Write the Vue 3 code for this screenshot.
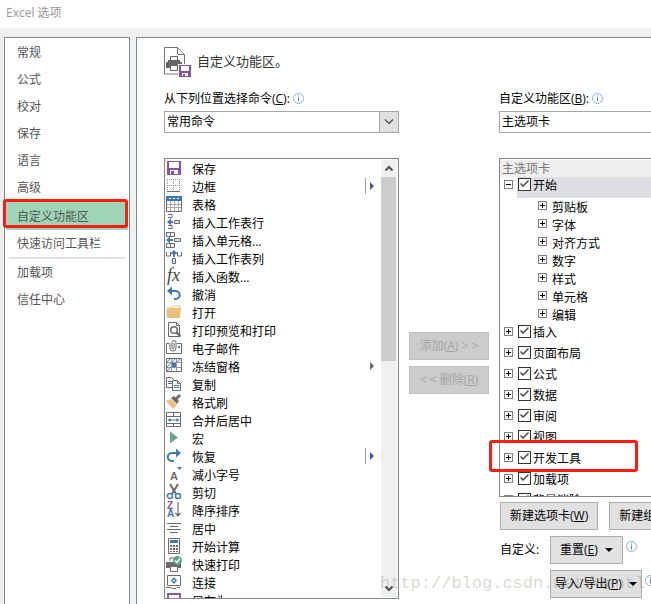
<script setup>
import { ref } from 'vue'

const navTop = ['常规', '公式', '校对', '保存', '语言', '高级', '自定义功能区', '快速访问工具栏']
const navBottom = ['加载项', '信任中心']
const active = ref('自定义功能区')

const G = '#6b6b6b'
const B = '#3f78b5'
const P = '#8653a5'
const T = '#e9c07f'

const commands = [
  { name: '保存', icon: `<path d="M1 1h14v14H1z" fill="${P}"/><path d="M3 2h10v6H3zM4 10h8v4H4z" fill="#fff"/><path d="M5 11h3v3H5z" fill="${P}"/>` },
  { name: '边框', split: true, icon: `<path d="M1.500 1v12M7.500 1v12M13.500 1v12M1 1.500h13M1 7.500h13" fill="none" stroke="#8d8d8d" stroke-dasharray="1 1"/><path d="M1 13.500h13" stroke="${G}"/>` },
  { name: '表格', icon: `<path d="M.500 .500h15v15H.500z" fill="#fff" stroke="${G}"/><path d="M0 0h16v5H0z" fill="${B}"/><path d="M3 2h2v1H3zM7 2h2v1H7zM11 2h2v1h-2z" fill="#fff"/><path d="M4.500 5v10M8.500 5v10M12.500 5v10M1 8.500h14M1 11.500h14" stroke="#aaa"/>` },
  { name: '插入工作表行', icon: `<path d="M2 .500h4v3H2M2 11.500h4v3H2" fill="none" stroke="${G}"/><path d="M8.500 6.500h5v3h-5z" fill="#d7e4f2" stroke="${G}"/><path d="M1 8l4-3.500v2.500h2v2H5v2.500z" fill="${B}"/>` },
  { name: '插入单元格...', icon: `<path d="M.500 .500h8v4h-8zM4.500 .500v4M.500 11.500h8v4h-8zM4.500 11.500v4" fill="none" stroke="${G}"/><path d="M8.500 6.500h6v3h-6z" fill="#d7e4f2" stroke="${G}"/><path d="M0 8l4-3.500v2.500h3v2H4v2.500z" fill="${B}"/>` },
  { name: '插入工作表列', icon: `<path d="M.500 2v4h4V2M11.500 2v4h4V2" fill="none" stroke="${G}"/><path d="M6.500 8.500h3v5h-3z" fill="#d7e4f2" stroke="${G}"/><path d="M8 0l4 4H9v3H7V4H4z" fill="${B}"/>` },
  { name: '插入函数...', icon: `<text x="1" y="13" font-family="Liberation Serif, serif" font-style="italic" font-size="18" fill="#444">fx</text>` },
  { name: '撤消', icon: `<path d="M3 5h6.500a4 3.800 0 0 1 0 8H8" fill="none" stroke="${B}" stroke-width="2"/><path d="M1 5l5-4.500v9z" fill="${B}"/>` },
  { name: '打开', icon: `<path d="M1 13V4h5l1-2h7v3" fill="#fff" stroke="${T}"/><path d="M1 14V6l3-2h11l-1 10z" fill="${T}"/>` },
  { name: '打印预览和打印', icon: `<path d="M2.500 .500h8l3 3v11h-11z" fill="#fff" stroke="${G}"/><path d="M10.500 .500v3h3" fill="none" stroke="${G}"/><circle cx="8" cy="8" r="3.300" fill="#fff" stroke="${G}" stroke-width="1.500"/><path d="M10.500 10.500l4 4" stroke="${G}" stroke-width="2.400"/>` },
  { name: '电子邮件', icon: `<path d="M3 3.500H.500v10h15v-10H11" fill="none" stroke="${G}"/><path d="M4 3v5a3 3 0 0 0 6 0V2.500a2 2 0 0 0-4 0V8a1 1 0 0 0 2 0V3" fill="none" stroke="${G}"/><path d="M12 6h2v2h-2z" fill="${B}"/>` },
  { name: '冻结窗格', sub: true, icon: `<path d="M.500 .500h15v13H.500z" fill="#eaf1f8" stroke="${G}"/><path d="M6 5h9v8H6z" fill="#fff"/><path d="M5.500 1v12M10.500 1v12M1 4.500h14M1 9.500h14" stroke="#999"/><path d="M1 4l3-3M1 9l4-4M6 4l3-3M11 4l3-3M1 13l4-4" stroke="${B}" stroke-width=".8"/><path d="M6 5h4v4H6z" fill="${B}"/>` },
  { name: '复制', icon: `<path d="M.500 1.500h5l2 2v8h-7z" fill="#fff" stroke="${G}"/><path d="M2 5.500h4M2 7.500h4" stroke="${B}"/><path d="M6.500 4.500h5l3 3v7h-8z" fill="#fff" stroke="${G}"/><path d="M11.500 4.500v3h3" fill="none" stroke="${G}"/><path d="M8 9.500h5M8 11.500h5" stroke="${B}"/>` },
  { name: '格式刷', icon: `<path d="M0 7l5-2 6 6-4 4z" fill="${T}"/><path d="M5 4l3-2 5 5-2 3z" fill="${G}"/><path d="M10 5l4-4" stroke="${G}" stroke-width="3"/>` },
  { name: '合并后居中', icon: `<path d="M.500 .500h14v14H.500zM.500 4.500h14M.500 11.500h14M7.500 .500v4M7.500 11.500v3" fill="none" stroke="${G}"/><path d="M3 8h9" stroke="${B}"/><path d="M1.500 8l3-2v4zM13.500 8l-3-2v4z" fill="${B}"/>` },
  { name: '宏', icon: `<path d="M4 1.500l8 6-8 6z" fill="#6aa38f"/>` },
  { name: '恢复', split: true, icon: `<path d="M12 5H6a4 3.800 0 0 0 0 8h2" fill="none" stroke="${B}" stroke-width="2"/><path d="M15 5l-5-4.500v9z" fill="${B}"/>` },
  { name: '减小字号', icon: `<text x="4" y="14" font-family="Liberation Sans, sans-serif" font-weight="bold" font-size="11" fill="${G}">A</text><path d="M11 1h5l-2.500 3z" fill="${B}"/>` },
  { name: '剪切', icon: `<path d="M4 0l6 10M12 0L6 10" stroke="${G}" stroke-width="2"/><circle cx="4" cy="12" r="2.500" fill="#fff" stroke="${B}" stroke-width="1.400"/><circle cx="12" cy="12" r="2.500" fill="#fff" stroke="${B}" stroke-width="1.400"/>` },
  { name: '降序排序', icon: `<text x="1" y="7" font-family="Liberation Sans, sans-serif" font-weight="bold" font-size="10" fill="${P}">Z</text><text x="1" y="15" font-family="Liberation Sans, sans-serif" font-weight="bold" font-size="10" fill="${B}">A</text><path d="M12 0v14M9.500 11l2.500 3 2.500-3" fill="none" stroke="${G}" stroke-width="1.200"/>` },
  { name: '居中', icon: `<path d="M1 3.500h14M4 6.500h8M1 9.500h14M4 12.500h8" stroke="${G}"/>` },
  { name: '开始计算', icon: `<path d="M2.500 .500h11v15h-11z" fill="#fff" stroke="${G}"/><path d="M4 2h8v3H4z" fill="${B}"/><path d="M4 7h2v2H4zM7 7h2v2H7zM10 7h2v2h-2zM4 10h2v2H4zM7 10h2v2H7zM10 10h2v2h-2zM4 13h2v1H4zM7 13h2v1H7zM10 13h2v1h-2z" fill="${G}"/>` },
  { name: '快速打印', icon: `<path d="M4 5V2h4" fill="none" stroke="${G}"/><path d="M0 6h15v6H0z" fill="${G}"/><path d="M4.500 10.500h7v5h-7z" fill="#fff" stroke="${G}"/><circle cx="11.500" cy="4.500" r="4.500" fill="#5fa48a"/><path d="M9 4.500l2 2 3-4" fill="none" stroke="#fff" stroke-width="1.400"/>` },
  { name: '连接', icon: `<path d="M1.500 1.500h13v10h-13z" fill="#fff" stroke="${G}"/><path d="M0 13.500h5l1 1h4l1-1h3" fill="none" stroke="${G}"/><path d="M8 3l3 3.500L8 10 5 6.500z" fill="${B}"/><path d="M8 5.200l1.200 1.300L8 7.800 6.800 6.500z" fill="#fff"/>` },
  { name: '另存为', icon: `<path d="M2 2h12v12H2z" fill="#fff" stroke="${P}" stroke-width="1.800"/>` }
]

const homeGroups = ['剪贴板', '字体', '对齐方式', '数字', '样式', '单元格', '编辑']
const tabs = ref(
  ['插入', '页面布局', '公式', '数据', '审阅', '视图', '开发工具', '加载项', '背景消除'].map(name => ({ name, on: true }))
)
const homeOn = ref(true)
</script>

<template>
  <div class="dialog">
    <header class="titlebar">Excel 选项</header>
    <div class="body">
      <nav class="nav">
        <a v-for="n in navTop" :key="n" href="#" class="nav-item" :class="{ active: n === active }" @click.prevent="active = n">
          {{ n }}<span v-if="n === '自定义功能区'" class="mark mark-nav"></span>
        </a>
        <hr class="rule" />
        <a v-for="n in navBottom" :key="n" href="#" class="nav-item" :class="{ active: n === active }" @click.prevent="active = n">{{ n }}</a>
      </nav>

      <main class="main">
        <div class="heading">
          <svg width="27" height="30" viewBox="0 0 27 30" aria-hidden="true">
            <path d="M.5 .5h13l7 7v19.500H.5z" fill="#fff" stroke="#777" />
            <path d="M13.500 .5v7h7" fill="none" stroke="#777" />
            <path d="M6.500 9.500h7v5h-7z" fill="#fff" stroke="#666" />
            <path d="M4 13h12v2h2v6H2v-6h2z" fill="#666" />
            <path d="M6.500 18.500h7v5h-7z" fill="#fff" stroke="#666" />
            <path d="M7 10h6v3H7z" fill="#fff" />
            <path d="M14 17h13v13H14z" fill="#fff" />
            <path d="M15 18h12v12H15z" fill="#8653a5" />
            <path d="M17 19h8v5h-8zM18 26h6v3h-6z" fill="#fff" />
            <path d="M19 27h2v2h-2z" fill="#8653a5" />
          </svg>
          <span>自定义功能区。</span>
        </div>

        <div class="columns">
          <section class="col">
            <div class="caption">
              <label for="source">从下列位置选择命令(<u>C</u>):</label>
              <svg class="info" viewBox="0 0 11 11" aria-hidden="true"><circle cx="5.500" cy="5.500" r="5" /><path d="M5.500 4.500v4M5.500 2.500v1" /></svg>
            </div>
            <div class="combo">
              <select id="source"><option>常用命令</option></select>
              <span class="drop"><svg width="10" height="6" viewBox="0 0 10 6"><path d="M1 .5l4 4 4-4" fill="none" stroke="#444" stroke-width="1.200" /></svg></span>
            </div>
            <div class="list source-list">
              <ul class="commands">
                <li v-for="c in commands" :key="c.name">
                  <svg class="icon" viewBox="0 0 16 16" aria-hidden="true" v-html="c.icon"></svg>
                  <span class="cmd">{{ c.name }}</span>
                  <span v-if="c.split || c.sub" class="more" :class="{ split: c.split }"></span>
                </li>
              </ul>
              <div class="scroll">
                <svg viewBox="0 0 16 17"><path d="M4.500 10.500L8 7l3.500 3.500" /></svg>
                <div class="thumb"></div>
                <svg class="down" viewBox="0 0 16 17"><path d="M4.500 6.500L8 10l3.500-3.500" /></svg>
              </div>
            </div>
          </section>

          <div class="transfer">
            <button type="button" disabled>添加(<u>A</u>) &gt; &gt;</button>
            <button type="button" disabled>&lt; &lt; 删除(<u>R</u>)</button>
          </div>

          <section class="col">
            <div class="caption">
              <label for="target">自定义功能区(<u>B</u>):</label>
              <svg class="info" viewBox="0 0 11 11" aria-hidden="true"><circle cx="5.500" cy="5.500" r="5" /><path d="M5.500 4.500v4M5.500 2.500v1" /></svg>
            </div>
            <div class="combo">
              <select id="target"><option>主选项卡</option></select>
            </div>
            <div class="list tree">
              <div class="tree-head">主选项卡</div>
              <div class="tab">
                <button type="button" class="expander open" aria-label="开始"></button>
                <label class="tab-label selected"><input v-model="homeOn" type="checkbox" /><span>开始</span></label>
              </div>
              <div v-for="g in homeGroups" :key="g" class="group">
                <button type="button" class="expander" :aria-label="g"></button>
                <span>{{ g }}</span>
              </div>
              <div v-for="t in tabs" :key="t.name" class="tab">
                <button type="button" class="expander" :aria-label="t.name"></button>
                <label class="tab-label"><input v-model="t.on" type="checkbox" /><span>{{ t.name }}</span></label>
                <span v-if="t.name === '开发工具'" class="mark mark-tab"></span>
              </div>
            </div>
            <div class="actions">
              <div class="action-row wide">
                <button type="button" class="btn">新建选项卡(<u>W</u>)</button>
                <button type="button" class="btn">新建组(<u>N</u>)</button>
              </div>
              <span class="custom">自定义:</span>
              <div class="action-row">
                <button type="button" class="btn menu"><span>重置(<u>E</u>)</span><i class="caret"></i></button>
                <svg class="info" viewBox="0 0 11 11" aria-hidden="true"><circle cx="5.500" cy="5.500" r="5" /><path d="M5.500 4.500v4M5.500 2.500v1" /></svg>
              </div>
              <div class="action-row second">
                <button type="button" class="btn menu tight"><span>导入/导出(<u>P</u>)</span><i class="caret"></i></button>
                <svg class="info" viewBox="0 0 11 11" aria-hidden="true"><circle cx="5.500" cy="5.500" r="5" /><path d="M5.500 4.500v4M5.500 2.500v1" /></svg>
              </div>
            </div>
          </section>
        </div>
      </main>
    </div>
    <div class="watermark">http://blog.csdn.net/wentl</div>
  </div>
</template>

<style>
body {
  margin: 0;
  overflow: hidden;
  background: #f0f0f0;
}
</style>

<style scoped>
* {
  box-sizing: border-box;
}
.dialog,
button,
select {
  font: 12px/16px "Open Sans", "Noto Sans CJK SC", sans-serif;
}
.dialog {
  position: relative;
  display: flex;
  flex-direction: column;
  height: 100vh;
  overflow: hidden;
  background: #f0f0f0;
  color: #000;
}
u {
  text-underline-offset: 1px;
}
.titlebar {
  flex: none;
  height: 28px;
  padding: 5px 6px;
  background: #fff;
  color: #999;
}
.body {
  display: flex;
  flex: 1;
  gap: 6px;
  padding: 9px 0 0 4px;
  margin-bottom: -8px;
}
.nav {
  flex: none;
  width: 126px;
  padding: 1px;
  background: #fff;
  border: 1px solid #828790;
}
.nav-item {
  position: relative;
  display: block;
  padding: 0 11px;
  line-height: 27px;
  color: #555;
  text-decoration: none;
}
.nav-item.active {
  margin-top: 1px;
  padding-top: 1px;
  background: #9fd5b7;
}
.rule {
  height: 2px;
  margin: 0 3px;
  border: 0;
  background: #e1e1e1;
}
.mark {
  position: absolute;
  border: 3px solid #fb1e10;
  border-radius: 3px;
  pointer-events: none;
}
.mark-nav {
  inset: -3px 0 2px -3px;
}
.mark-tab {
  top: -10px;
  left: -11px;
  width: 149px;
  height: 32px;
}
.main {
  flex: 1;
  min-width: 0;
  margin-right: -24px;
  padding: 9px 0 0 27px;
  background: #fff;
  border: 1px solid #828790;
}
.heading {
  display: flex;
  align-items: center;
  gap: 6px;
  height: 30px;
  margin-bottom: 11px;
  font-size: 13px;
  color: #333;
}
.heading span {
  padding-bottom: 2px;
}
.columns {
  display: grid;
  grid-template-columns: 235px 80px minmax(0, 1fr);
  gap: 10px;
}
.caption {
  display: flex;
  align-items: center;
  gap: 3px;
  height: 20px;
  margin-bottom: 3px;
}
.caption label {
  padding-top: 1px;
}
.info {
  flex: none;
  width: 11px;
  height: 11px;
  fill: #fff;
  stroke: #8db0dc;
}
.info path {
  stroke: #4f83c6;
}
.combo {
  position: relative;
  margin-bottom: 25px;
}
.combo select {
  display: block;
  width: 100%;
  height: 22px;
  padding: 0 2px;
  appearance: none;
  background: #fff;
  border: 1px solid #a5a7ad;
  border-radius: 0;
  color: #000;
}
.drop {
  position: absolute;
  inset: 0 0 0 auto;
  display: grid;
  place-items: center;
  width: 20px;
  background: #e1e1e1;
  border: 1px solid #a5a7ad;
  pointer-events: none;
}
.list {
  background: #fff;
  border: 1px solid #828790;
}
.source-list {
  display: flex;
  height: 441px;
  padding: 1px;
  overflow: hidden;
}
.commands {
  flex: 1;
  margin: 0;
  padding: 0;
  list-style: none;
}
.commands li {
  display: flex;
  gap: 10px;
  height: 18px;
}
.icon {
  flex: none;
  width: 16px;
  height: 16px;
  overflow: visible;
}
.cmd {
  flex: 1;
  padding-top: 1px;
  line-height: 18px;
}
.more {
  display: flex;
  align-items: center;
  width: 16px;
  height: 16px;
  padding-left: 4px;
  border-left: 1px solid transparent;
}
.more::before {
  content: "";
  border: 4px solid transparent;
  border-left-color: #666;
  border-right-width: 0;
}
.more.split {
  border-left-color: #a0a0a0;
}
.more.split::before {
  border-left-color: #3f57a5;
}
.scroll {
  display: flex;
  flex-direction: column;
  width: 16px;
  background: #f0f0f0;
}
.scroll svg {
  flex: none;
  width: 16px;
  height: 17px;
  fill: none;
  stroke: #505050;
  stroke-width: 2;
}
.scroll .down {
  margin-top: auto;
}
.thumb {
  height: 184px;
  margin-right: 1px;
  background: #cdcdcd;
}
.transfer {
  display: flex;
  flex-direction: column;
  gap: 6px;
  padding-top: 244px;
}
.transfer button {
  height: 28px;
  padding: 0;
  background: #ccc;
  border: 1px solid #bfbfbf;
  color: #a4a4a4;
}
.tree {
  height: 339px;
  padding-top: 1px;
  overflow-x: visible;
  overflow-y: clip;
}
.tree-head {
  height: 17px;
  padding: 1px 2px 0;
  background: #eee;
  color: #777;
}
.tab {
  position: relative;
  display: flex;
  height: 21px;
}
.expander {
  flex: none;
  width: 9px;
  height: 9px;
  margin: 3px 4px 0;
  padding: 0;
  border: 1px solid #808080;
  background:
    linear-gradient(#000, #000) center / 5px 1px no-repeat,
    linear-gradient(#000, #000) center / 1px 5px no-repeat,
    #fff;
}
.expander.open {
  background: linear-gradient(#000, #000) center / 5px 1px no-repeat, #fff;
}
.tab-label {
  display: flex;
  flex: 1;
  gap: 2px;
  padding: 1px 1px 0;
}
.tab-label.selected {
  background: #dedde3;
}
.tab-label input {
  width: 13px;
  height: 13px;
  margin: 0;
  appearance: none;
  background: #fff;
  border: 1px solid #333;
}
.tab-label input:checked::before {
  content: "";
  display: block;
  height: 11px;
  background: #444;
  clip-path: polygon(1px 5px, 2px 4px, 4px 6px, 9px 1px, 10px 2px, 4px 8px);
}
.group {
  display: flex;
  height: 18px;
  padding-left: 34px;
}
.group span {
  padding: 2px 1px 0;
}
.actions {
  display: grid;
  grid-template-columns: 50px minmax(0, 1fr);
  gap: 6px 0;
  align-items: center;
  padding: 5px 0 0 1px;
}
.action-row {
  display: flex;
  gap: 3px;
}
.action-row.wide {
  grid-column: 1 / -1;
  gap: 11px;
}
.action-row.second {
  grid-column: 2;
}
.action-row .info {
  margin-top: 5px;
}
.btn {
  flex: none;
  height: 28px;
  padding: 0 9px;
  background: #e1e1e1;
  border: 1px solid #adadad;
  color: #000;
}
.menu {
  display: flex;
  align-items: center;
  gap: 7px;
}
.menu.tight {
  padding: 0 4px;
}
.caret {
  border: 4px solid transparent;
  border-top-color: #000;
  border-bottom-width: 0;
}
.watermark {
  position: absolute;
  left: 380px;
  bottom: 8px;
  font: 17px/24px "Liberation Mono", monospace;
  color: rgba(120, 120, 105, 0.3);
  white-space: nowrap;
  pointer-events: none;
}
</style>
